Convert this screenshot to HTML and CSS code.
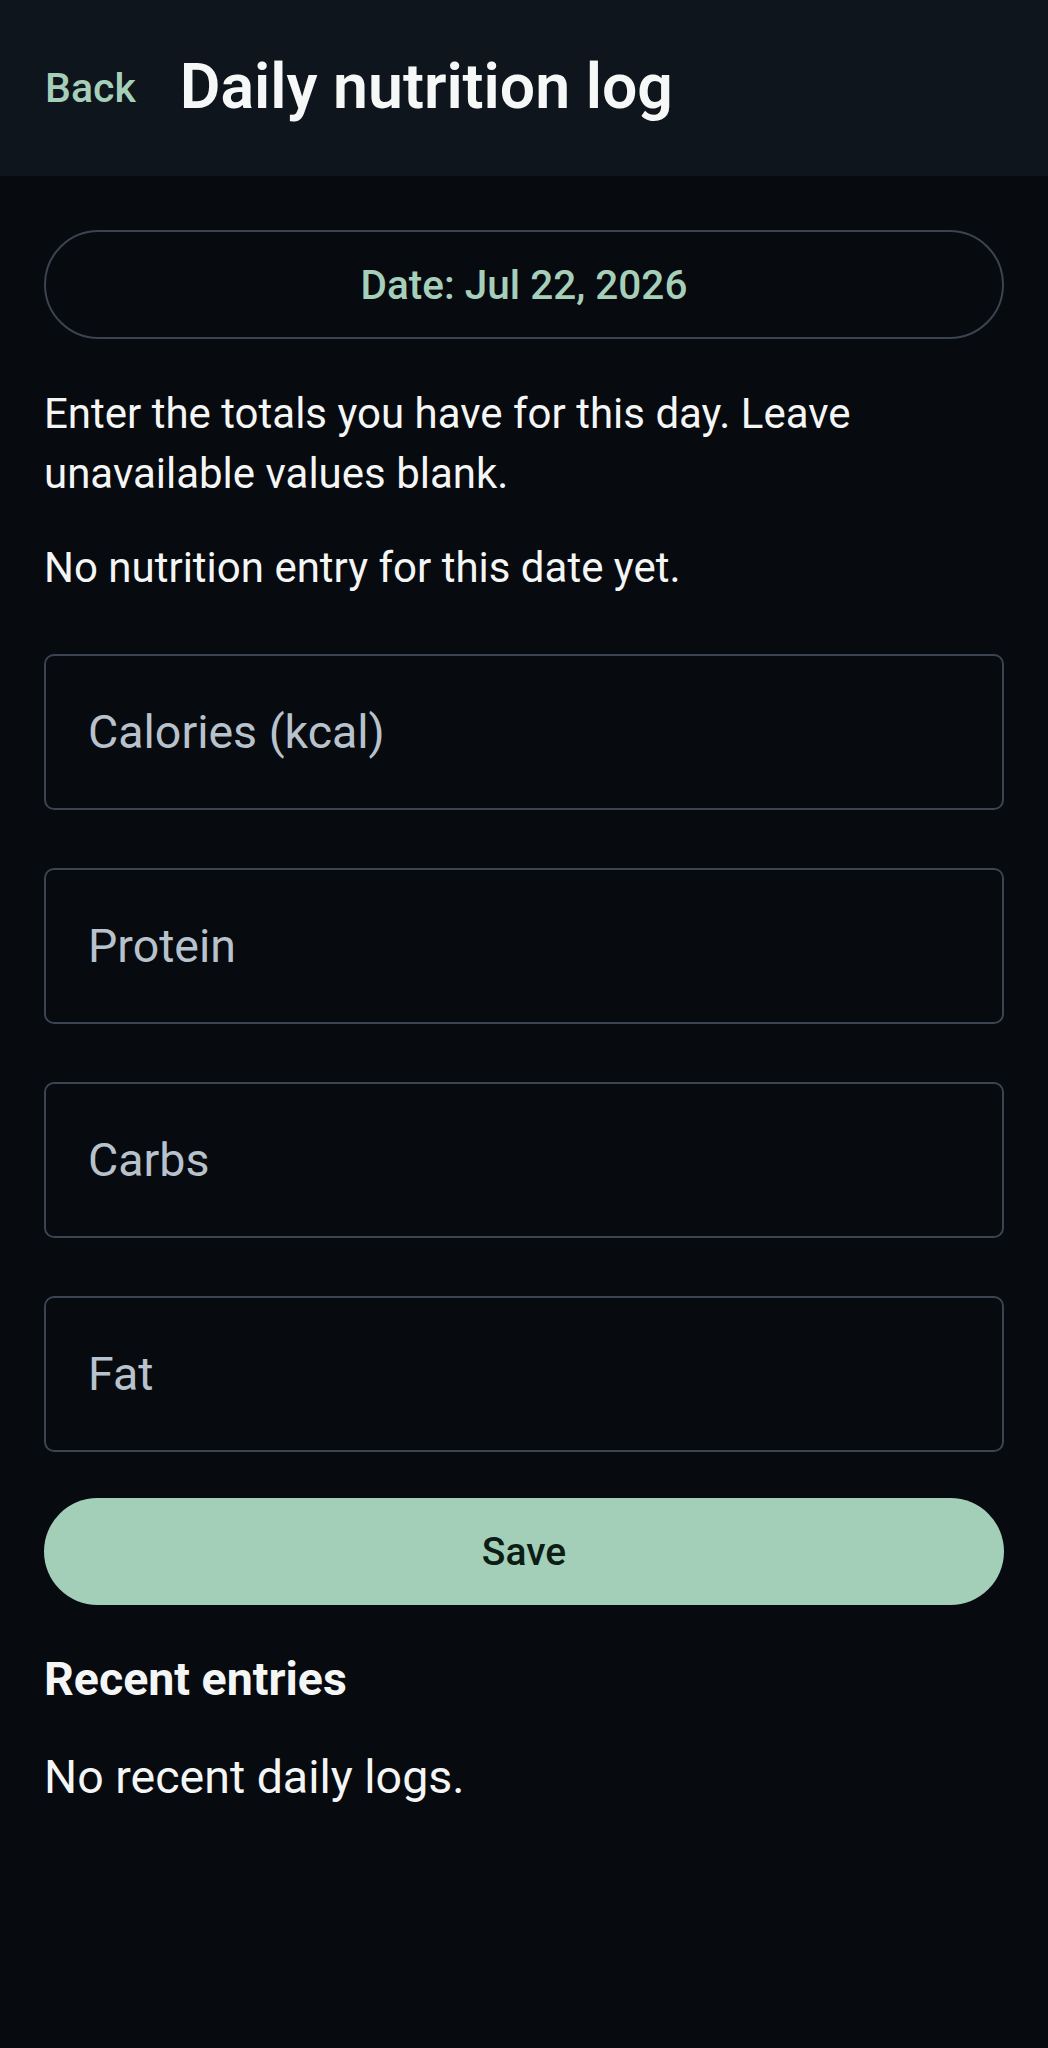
FILE: index.html
```html
<!DOCTYPE html>
<html lang="en">
<head>
    <meta charset="UTF-8">
    <meta name="viewport" content="width=device-width, initial-scale=1.0">
    <title>Daily nutrition log</title>
    <link rel="stylesheet" href="styles.css">
</head>
<body>

    <header class="topbar">
        <a class="back" href="#">Back</a>
        <h1>Daily nutrition log</h1>
    </header>

    <main class="content">
        <button class="date-pill">Date: Jul 22, 2026</button>

        <p class="hint">Enter the totals you have for this day. Leave unavailable values blank.</p>
        <p class="status">No nutrition entry for this date yet.</p>

        <form class="fields">
            <input type="text" placeholder="Calories (kcal)">
            <input type="text" placeholder="Protein">
            <input type="text" placeholder="Carbs">
            <input type="text" placeholder="Fat">
            <button type="button" class="save">Save</button>
        </form>

        <h2>Recent entries</h2>
        <p class="empty">No recent daily logs.</p>
    </main>

</body>
</html>
```

FILE: styles.css
```css
body {
    margin: 0;
    padding: 0;
    background: #070a0f;
    color: #f4f6f5;
    font-family: Roboto, "Noto Sans", sans-serif;
    min-height: 2048px;
}
.topbar {
    height: 176px;
    background: #0e151d;
    display: flex;
    align-items: center;
    gap: 44px;
    padding-left: 45px;
    box-sizing: border-box;
}
.back {
    color: #a5cfb9;
    text-decoration: none;
    font-size: 41px;
    font-weight: 500;
}
h1 {
    margin: 0;
    font-size: 62.5px;
    font-weight: 600;
    color: #f6f8f7;
    position: relative;
    top: -2px;
}
.content {
    padding: 54px 44px 0;
    display: flex;
    flex-direction: column;
}
.date-pill {
    height: 109px;
    border: 2px solid #3b4450;
    border-radius: 60px;
    background: transparent;
    color: #a5cfb9;
    font-family: inherit;
    font-size: 40.5px;
    font-weight: 500;
}
.hint,
.status {
    font-size: 42px;
    line-height: 60px;
    margin: 0;
}
.hint {
    margin-top: 45px;
}
.status {
    margin-top: 34px;
}
.fields {
    display: flex;
    flex-direction: column;
    gap: 58px;
    margin-top: 56px;
}
input[type="text"] {
    height: 156px;
    box-sizing: border-box;
    border: 2px solid #3b4450;
    border-radius: 10px;
    background: transparent;
    padding: 0 42px;
    font-family: inherit;
    font-size: 46.5px;
    color: #f4f6f5;
    outline: none;
}
input[type="text"]::placeholder {
    color: #b8c2cc;
}
.save {
    margin-top: -12px;
    height: 107px;
    border: none;
    border-radius: 60px;
    background: #a3cfb9;
    color: #0c1d15;
    font-family: inherit;
    font-size: 39px;
    font-weight: 500;
}
h2 {
    margin: 44px 0 0;
    font-size: 46.5px;
    font-weight: 700;
    line-height: 60px;
}
.empty {
    margin: 38px 0 0;
    font-size: 46.5px;
    line-height: 60px;
}
```
